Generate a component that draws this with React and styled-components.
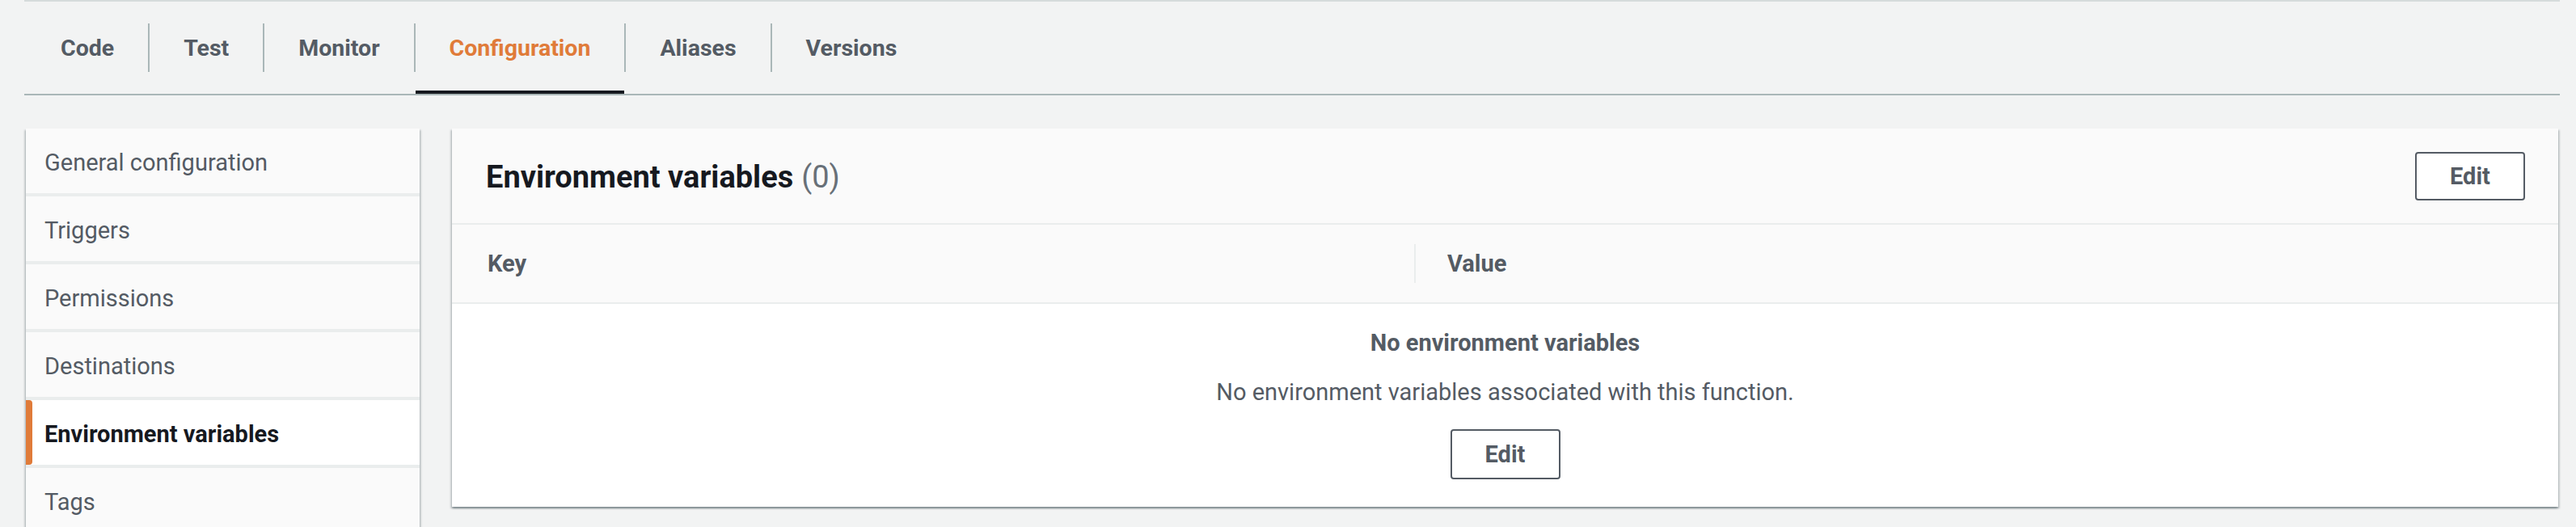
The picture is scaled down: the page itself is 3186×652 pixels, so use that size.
import React from "react";
import styled, { createGlobalStyle, css } from "styled-components";

const GlobalStyle = createGlobalStyle`
  html, body {
    margin: 0;
    padding: 0;
    background: #f2f3f3;
    font-family: Roboto, "Liberation Sans", sans-serif;
    color: #545b64;
    overflow: hidden;
  }
  * {
    box-sizing: border-box;
  }
`;

const Page = styled.div`
  padding: 0 20px 0 30px;
  height: 652px;
  overflow: hidden;
`;

const TabBar = styled.nav`
  display: flex;
  align-items: stretch;
  height: 118px;
  border-top: 2px solid #d5dbdb;
  border-bottom: 2px solid #aab7b8;
`;

const Tab = styled.div`
  position: relative;
  display: flex;
  align-items: center;
  padding: 0 42px;
  font-size: 28.5px;
  font-weight: 700;
  color: ${(p) => (p.$active ? "#e07b39" : "#545b64")};

  &:first-child {
    padding-left: 45px;
  }

  ${(p) =>
    p.$active &&
    css`
      &::after {
        content: "";
        position: absolute;
        left: 0;
        right: 0;
        bottom: 0;
        height: 4px;
        background: #16191f;
      }
    `}
`;

const TabDivider = styled.span`
  align-self: center;
  width: 2px;
  height: 60px;
  background: #aab7b8;
`;

const Content = styled.div`
  display: grid;
  grid-template-columns: 487px 1fr;
  gap: 40px;
  margin: 41px 2px 0 2px;
`;

const SideNav = styled.ul`
  list-style: none;
  margin: 0;
  padding: 0;
  display: flex;
  flex-direction: column;
  gap: 4px;
  background: #eaeded;
  box-shadow: 0 2px 2px 0 rgba(0, 28, 36, 0.3),
    2px 2px 2px 0 rgba(0, 28, 36, 0.15), -2px 2px 2px 0 rgba(0, 28, 36, 0.15);
`;

const NavItem = styled.li`
  position: relative;
  display: flex;
  align-items: center;
  height: 80px;
  padding: 4px 0 0 23px;
  font-size: 29px;
  background: ${(p) => (p.$active ? "#ffffff" : "#fafafa")};
  color: ${(p) => (p.$active ? "#16191f" : "#545b64")};
  font-weight: ${(p) => (p.$active ? 700 : 400)};

  ${(p) =>
    p.$active &&
    css`
      &::before {
        content: "";
        position: absolute;
        left: 0;
        top: 0;
        bottom: 0;
        width: 8px;
        background: #e07b39;
        border-radius: 0 4px 4px 0;
      }
    `}
`;

const Panel = styled.section`
  align-self: start;
  background: #ffffff;
  box-shadow: 0 2px 2px 0 rgba(0, 28, 36, 0.3),
    2px 2px 2px 0 rgba(0, 28, 36, 0.15), -2px 2px 2px 0 rgba(0, 28, 36, 0.15);
`;

const PanelHeader = styled.header`
  display: flex;
  align-items: center;
  justify-content: space-between;
  height: 119px;
  padding: 0 41px 0 42px;
  background: #fafafa;
  border-bottom: 2px solid #eaeded;
`;

const Title = styled.h2`
  margin: 0;
  padding-top: 2px;
  font-size: 38px;
  font-weight: 700;
  color: #16191f;
`;

const Counter = styled.span`
  margin-left: 10px;
  font-weight: 400;
  color: #687078;
`;

const Button = styled.button`
  width: 136px;
  height: ${(p) => p.$h || 60}px;
  border: 2px solid #545b64;
  border-radius: 4px;
  background: #ffffff;
  font-family: inherit;
  font-size: 29px;
  font-weight: 700;
  color: #545b64;
  cursor: pointer;
  margin-top: ${(p) => p.$mt || 0}px;
`;

const TableHead = styled.div`
  display: grid;
  grid-template-columns: 1190px 1fr;
  align-items: center;
  height: 98px;
  background: #fafafa;
  border-bottom: 2px solid #eaeded;
`;

const HeadCell = styled.div`
  display: flex;
  align-items: center;
  height: 48px;
  padding-left: ${(p) => p.$pad}px;
  font-size: 29px;
  font-weight: 700;
  color: #545b64;
  border-left: ${(p) => (p.$divider ? "2px solid #eaeded" : "none")};
`;

const Empty = styled.div`
  display: flex;
  flex-direction: column;
  align-items: center;
  height: 251px;
  padding-top: 28px;
`;

const EmptyTitle = styled.div`
  line-height: 40px;
  font-size: 29px;
  font-weight: 700;
  color: #545b64;
`;

const EmptyText = styled.div`
  margin-top: 21px;
  line-height: 40px;
  font-size: 29px;
  color: #545b64;
`;

const tabs = ["Code", "Test", "Monitor", "Configuration", "Aliases", "Versions"];
const navItems = [
  "General configuration",
  "Triggers",
  "Permissions",
  "Destinations",
  "Environment variables",
  "Tags",
];

export default function App() {
  const activeTab = "Configuration";
  const activeNav = "Environment variables";

  return (
    <>
      <GlobalStyle />
      <Page>
        <TabBar>
          {tabs.map((t, i) => (
            <React.Fragment key={t}>
              {i > 0 && <TabDivider />}
              <Tab $active={t === activeTab}>{t}</Tab>
            </React.Fragment>
          ))}
        </TabBar>

        <Content>
          <SideNav>
            {navItems.map((n) => (
              <NavItem key={n} $active={n === activeNav}>
                {n}
              </NavItem>
            ))}
          </SideNav>

          <Panel>
            <PanelHeader>
              <Title>
                Environment variables<Counter>(0)</Counter>
              </Title>
              <Button>Edit</Button>
            </PanelHeader>
            <TableHead>
              <HeadCell $pad={44}>Key</HeadCell>
              <HeadCell $pad={39} $divider>
                Value
              </HeadCell>
            </TableHead>
            <Empty>
              <EmptyTitle>No environment variables</EmptyTitle>
              <EmptyText>
                No environment variables associated with this function.
              </EmptyText>
              <Button $mt={26} $h={62}>
                Edit
              </Button>
            </Empty>
          </Panel>
        </Content>
      </Page>
    </>
  );
}
